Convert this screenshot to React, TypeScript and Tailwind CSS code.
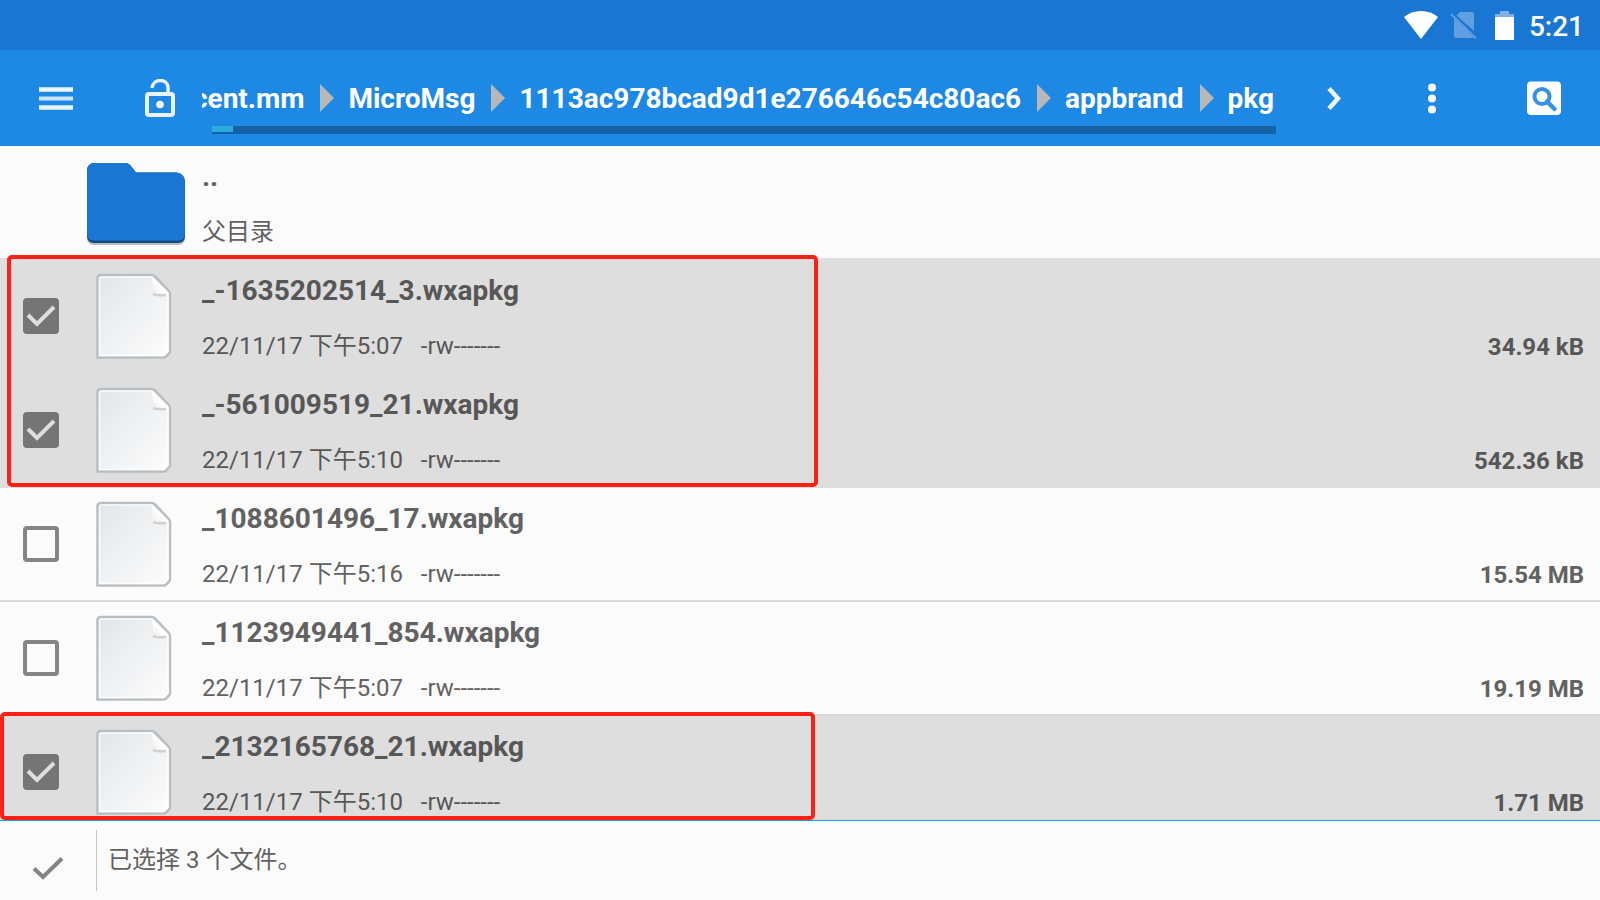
import type { ReactNode } from "react";

type FileEntry = { name: string; date: string; size: string; selected: boolean };

const firstPicked: FileEntry[] = [
  { name: "_-1635202514_3.wxapkg", date: "22/11/17 下午5:07", size: "34.94 kB", selected: true },
  { name: "_-561009519_21.wxapkg", date: "22/11/17 下午5:10", size: "542.36 kB", selected: true },
];
const unpicked: FileEntry[] = [
  { name: "_1088601496_17.wxapkg", date: "22/11/17 下午5:16", size: "15.54 MB", selected: false },
  { name: "_1123949441_854.wxapkg", date: "22/11/17 下午5:07", size: "19.19 MB", selected: false },
];
const lastPicked: FileEntry[] = [
  { name: "_2132165768_21.wxapkg", date: "22/11/17 下午5:10", size: "1.71 MB", selected: true },
];

const crumbs = ["com.tencent.mm", "MicroMsg", "1113ac978bcad9d1e276646c54c80ac6", "appbrand", "pkg"];

function StatusBar() {
  return (
    <div className="flex h-[50px] shrink-0 items-center justify-end bg-[#1976d2] pr-4 text-white">
      <svg className="mr-3 h-7 w-[34px]" viewBox="0 0 34 28" aria-hidden="true">
        <path d="M0 6C9-2 25-2 34 6L17 28Z" fill="#fff" />
      </svg>
      <svg className="mr-[17px] h-7 w-7" viewBox="0 0 28 28" aria-hidden="true">
        <path d="M10 1H22Q24 1 24 3V20L6.500 4.500ZM4 7L23.500 26Q23 27 22 27H6Q4 27 4 25Z" fill="#629fe0" />
        <path d="M1 3L26 27.500" stroke="#629fe0" strokeWidth="2" />
      </svg>
      <svg className="mr-[15px] h-[29px] w-[19px]" viewBox="0 0 19 29" aria-hidden="true">
        <path d="M5 0H14V3H19V7H0V3H5Z" fill="#7fb2e6" />
        <path d="M0 6H19V29H0Z" fill="#fff" />
      </svg>
      <time className="pt-[3px] text-[28px] leading-8 font-medium">5:21</time>
    </div>
  );
}

function Breadcrumbs() {
  return (
    <nav aria-label="路径" className="flex h-full min-w-0 flex-1 flex-col overflow-hidden">
      <ol className="flex h-[76px] items-center justify-end pt-[22px] pr-[2px]">
        {crumbs.map((crumb, i) => (
          <li key={crumb} className="flex shrink-0 items-center">
            {i > 0 && (
              <svg className="mr-[14px] mb-[2px] ml-4 h-7 w-[14px]" viewBox="0 0 14 28" aria-hidden="true">
                <path d="M0 0L14 14L0 28Z" fill="#b8b8b8" />
              </svg>
            )}
            <a href="#" className="text-[28px] leading-8 font-bold text-white">{crumb}</a>
          </li>
        ))}
      </ol>
      <div role="progressbar" aria-label="已用空间" aria-valuenow={2} className="ml-[10px] h-2 bg-[#1662a6]">
        <div className="h-[6px] w-[2%] bg-[#30abe0]" />
      </div>
    </nav>
  );
}

function Toolbar() {
  return (
    <header className="flex h-24 shrink-0 items-center bg-[#1e88e5]">
      <button aria-label="菜单" className="ml-[39px] shrink-0">
        <svg className="h-6 w-[34px]" viewBox="0 0 34 24">
          <path d="M0 3.500H34M0 21.500H34" stroke="#eaf4fd" strokeWidth="4.500" />
          <path d="M0 12.500H34" stroke="#cde4f9" strokeWidth="4" />
        </svg>
      </button>
      <button aria-label="解锁" className="mr-[27px] ml-[72px] shrink-0">
        <svg className="h-[38px] w-[30px]" viewBox="0 0 30 38" fill="none">
          <rect x="2" y="15" width="26" height="21" rx="2" stroke="#e8f3fd" strokeWidth="4" />
          <path d="M7 9C8-1 23-1 23 9V15" stroke="#e8f3fd" strokeWidth="3.500" />
          <circle cx="15" cy="25.500" r="3.800" fill="#fff" />
        </svg>
      </button>
      <Breadcrumbs />
      <button aria-label="前进" className="ml-[51px] shrink-0">
        <svg className="h-6 w-[14px]" viewBox="0 0 14 24" fill="none">
          <path d="M2 2.500L11 12.500L2 22.500" stroke="#f0f7fe" strokeWidth="4.500" />
        </svg>
      </button>
      <button aria-label="更多" className="ml-[87px] shrink-0">
        <svg className="h-8 w-2" viewBox="0 0 8 32" fill="#f4f9fe">
          <circle cx="4" cy="5.500" r="4" /><circle cx="4" cy="16.500" r="4" /><circle cx="4" cy="27.500" r="4" />
        </svg>
      </button>
      <button aria-label="搜索" className="mr-[39px] ml-[91px] shrink-0">
        <svg className="h-[34px] w-[34px]" viewBox="0 0 34 34" fill="none">
          <rect y="0.500" width="34" height="33.500" rx="4" fill="#fff" />
          <circle cx="15" cy="15.500" r="7.500" stroke="#3592e7" strokeWidth="4" />
          <path d="M20 20.500L27.500 28" stroke="#3592e7" strokeWidth="4.500" strokeLinecap="round" />
        </svg>
      </button>
    </header>
  );
}

function DocumentIcon() {
  return (
    <svg className="h-[86px] w-[76px]" viewBox="0 0 76 86" aria-hidden="true">
      <defs>
        <linearGradient id="paper" x1="0" y1="0" x2="1" y2="1">
          <stop offset="0" stopColor="#e2e5e8" /><stop offset="1" stopColor="#fdfdfd" />
        </linearGradient>
        <linearGradient id="fold" x1="0" y1="1" x2="1" y2="0">
          <stop offset="0" stopColor="#ebecee" /><stop offset="0.5" stopColor="#ffffff" />
        </linearGradient>
      </defs>
      <path d="M5 2H56Q57.500 2 59 3.500L72 17Q74 19 74 21V78Q74 79.500 73 80.500L70 83.500Q69 84.500 67.500 84.500H1.500V5.500Q1.500 2 5 2Z" fill="url(#paper)" stroke="#b9bec2" strokeWidth="2.500" />
      <path d="M5.500 4H55.500L72 20.500V78L68 82.500H3.500V6Q3.500 4 5.500 4Z" fill="none" stroke="#fff" strokeOpacity="0.8" strokeWidth="1.500" />
      <path d="M57 21Q62 23 70 22" fill="none" stroke="#cfd1d3" strokeWidth="2.500" />
      <path d="M56 5L71 20.500H60Q57 20.500 57 16Z" fill="url(#fold)" />
    </svg>
  );
}

type RowProps = { lead?: ReactNode; icon: ReactNode; title: ReactNode; detail: string; size?: string; tone: string };

function Row({ lead, icon, title, detail, size, tone }: RowProps) {
  return (
    <li className={tone}>
      <div className="w-[82px] shrink-0 pt-[38px] pl-[23px]">{lead}</div>
      <div className="flex w-[120px] shrink-0 justify-start pt-[13px]">{icon}</div>
      <div className="flex min-w-0 flex-1 flex-col gap-[23px] pt-[15px]">
        <div className="text-[28px] leading-8 font-bold">{title}</div>
        <div className="text-2xl leading-8 whitespace-pre">{detail}</div>
      </div>
      <div className="pt-[71px] pr-4 text-2xl leading-8 font-bold">{size}</div>
    </li>
  );
}

function FileRow({ file }: { file: FileEntry }) {
  return (
    <Row
      tone={
        file.selected
          ? "flex h-[114px] border-b-2 border-[#dddddd] bg-[#dedede] text-[#575757]"
          : "flex h-[114px] border-b-2 border-[#dadada] text-[#626262]"
      }
      lead={
        <div className="grid size-9">
          <input
            id={file.name}
            type="checkbox"
            defaultChecked={file.selected}
            className="peer col-start-1 row-start-1 size-9 appearance-none rounded-[4px] border-4 border-[#858585] checked:border-[#757575] checked:bg-[#757575]"
          />
          <svg className="pointer-events-none invisible col-start-1 row-start-1 size-9 peer-checked:visible" viewBox="0 0 36 36" fill="none" aria-hidden="true">
            <path d="M5 17L14 26L31 9" stroke="#dedede" strokeWidth="4" />
          </svg>
        </div>
      }
      icon={<div className="pl-[14px]"><DocumentIcon /></div>}
      title={<label htmlFor={file.name}>{file.name}</label>}
      detail={`${file.date}   -rw-------`}
      size={file.size}
    />
  );
}

export default function App() {
  return (
    <div className="flex h-screen flex-col overflow-hidden bg-[#fbfbfb] font-[Roboto,'Noto_Sans_CJK_SC',sans-serif]">
      <StatusBar />
      <Toolbar />
      <main className="min-h-0 flex-1 overflow-hidden">
        <ul>
          <Row
            tone="flex h-28 text-[#626262]"
            icon={
              <svg className="mt-[2px] ml-1 h-[86px] w-[100px]" viewBox="0 0 100 86" aria-hidden="true">
                <path d="M1 11Q1 2 9 2H39Q42 2 44 4L50 12H91Q99 13 99 22V76Q99 84 92 84H8Q1 84 1 76Z" fill="#b9bdc2" />
                <path d="M1 10Q1 2 9 2H39Q42 2 44 4L50 11.500H91Q99 13 99 22V75Q99 82 92 82H8Q1 82 1 75Z" fill="#174a7c" />
                <path d="M1 10Q1 2 9 2H39Q42 2 44 4L50 11.500H91Q99 13 99 22V72Q99 79.500 92 79.500H8Q1 79.500 1 72Z" fill="#1976d2" />
              </svg>
            }
            title=".."
            detail="父目录"
          />
        </ul>
        <div className="relative">
          <ul className="border-t-2 border-[#dddddd]">
            {firstPicked.map((f) => <FileRow key={f.name} file={f} />)}
          </ul>
          <div className="pointer-events-none absolute -top-[3px] bottom-px left-[7px] w-[811px] rounded-[5px] border-4 border-[#ff2015]" />
        </div>
        <ul>
          {unpicked.map((f) => <FileRow key={f.name} file={f} />)}
        </ul>
        <div className="relative">
          <ul>
            {lastPicked.map((f) => <FileRow key={f.name} file={f} />)}
          </ul>
          <div className="pointer-events-none absolute -top-1 left-0 h-[108px] w-[815px] rounded-[5px] border-4 border-[#ff2015]" />
        </div>
      </main>
      <footer className="flex h-20 shrink-0 border-t border-[#1a9fd4] text-[#626262]">
        <button aria-label="完成" className="flex w-24 shrink-0 pt-[35px] pl-8">
          <svg className="h-6 w-8" viewBox="0 0 32 24" fill="none">
            <path d="M2 12.500L11 21L30 2.500" stroke="#858585" strokeWidth="4" />
          </svg>
        </button>
        <p className="my-[9px] border-l border-[#c4c4c4] pt-[14px] pl-[11px] text-2xl leading-8">已选择 3 个文件。</p>
      </footer>
    </div>
  );
}
